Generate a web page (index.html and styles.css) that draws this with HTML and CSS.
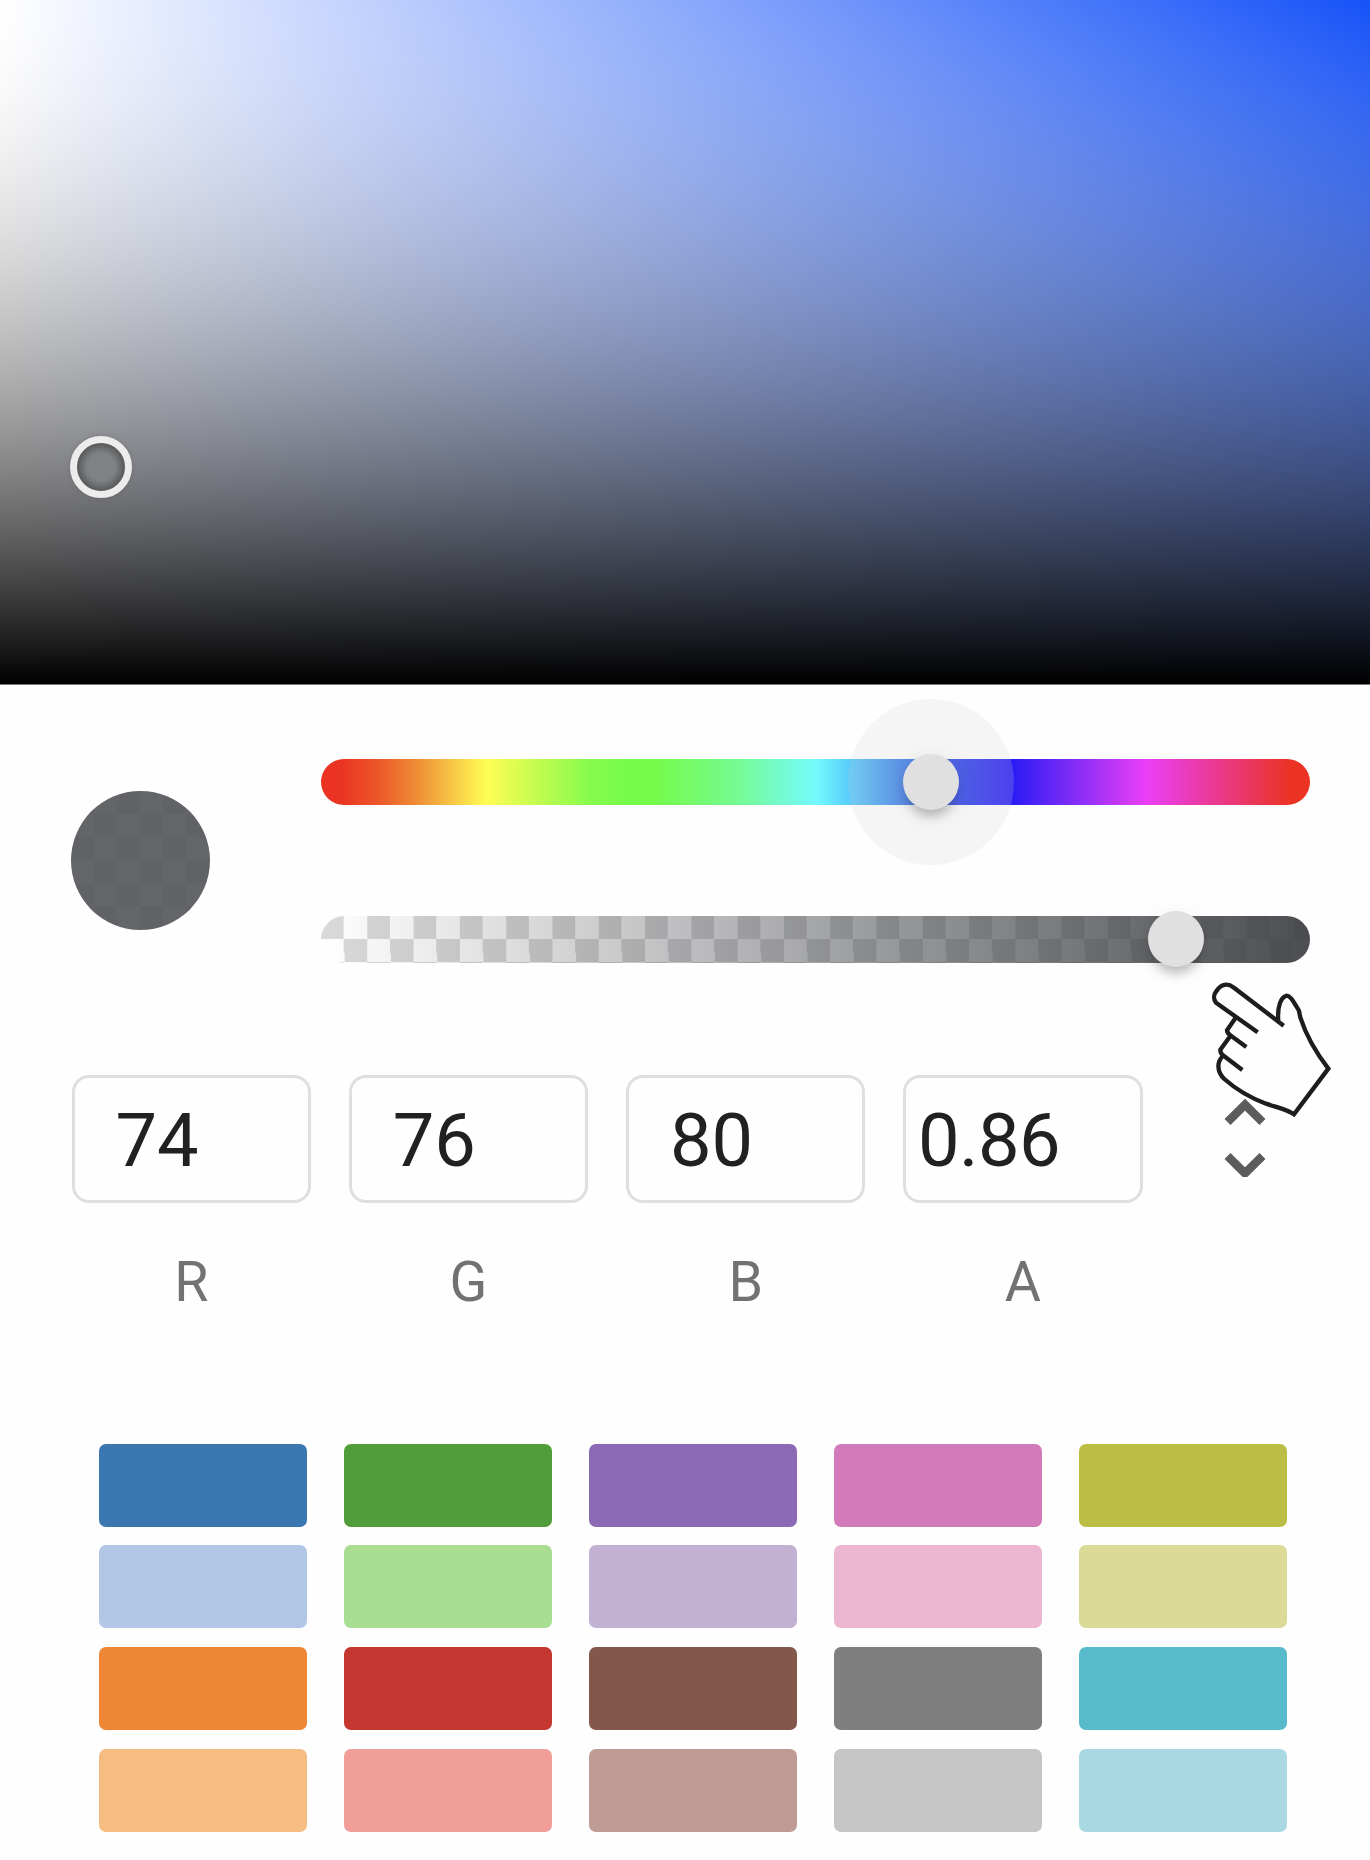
FILE: index.html
```html
<!DOCTYPE html>
<html lang="en">
<head>
<meta charset="utf-8">
<title>Color picker</title>
<link rel="stylesheet" href="styles.css">
</head>
<body>
<main class="picker">
  <section class="canvas">
    <svg class="canvas-fill" viewBox="0 0 1370 684" preserveAspectRatio="none">
      <defs>
        <linearGradient id="saturation" x1="0" y1="0" x2="1" y2="0">
          <stop offset="0" stop-color="#fff"/>
          <stop offset="1" stop-color="#1652f8"/>
        </linearGradient>
        <linearGradient id="value" x1="0" y1="0" x2="0" y2="1">
          <stop offset="0" stop-color="#f4f4f4" stop-opacity="0"/>
          <stop offset="1" stop-color="#000"/>
        </linearGradient>
      </defs>
      <rect width="1370" height="684" fill="url(#saturation)"/>
      <rect width="1370" height="684" fill="url(#value)"/>
    </svg>
    <span class="canvas-dot"></span>
  </section>

  <section class="preview">
    <div class="swatch-dot"></div>
    <div class="sliders">
      <div class="slider hue"><span class="ripple"></span><span class="thumb"></span></div>
      <div class="slider alpha"><span class="thumb"></span></div>
    </div>
  </section>

  <section class="edit">
    <label class="field"><span class="box">74</span><span class="name">R</span></label>
    <label class="field"><span class="box">76</span><span class="name">G</span></label>
    <label class="field"><span class="box">80</span><span class="name">B</span></label>
    <label class="field"><span class="box wide">0.86</span><span class="name">A</span></label>
    <svg class="chevrons" viewBox="0 0 46 80">
      <path d="M5.5 25 23 7.7 40.5 25M5.5 59 23 76.3 40.5 59"/>
    </svg>
  </section>

  <section class="swatches">
    <i class="blue"></i><i class="green"></i><i class="purple"></i><i class="pink"></i><i class="olive"></i>
    <i class="blue-light"></i><i class="green-light"></i><i class="purple-light"></i><i class="pink-light"></i><i class="olive-light"></i>
    <i class="orange"></i><i class="red"></i><i class="brown"></i><i class="gray"></i><i class="cyan"></i>
    <i class="orange-light"></i><i class="red-light"></i><i class="brown-light"></i><i class="gray-light"></i><i class="cyan-light"></i>
  </section>

  <svg class="hand" viewBox="390 300 366 417">
    <path class="palm" d="M592 424C588 378 600 352 617 347C629 347 639 368 650 385C657 393 654 402 659 415C675 465 707 520 742 566L639 703C620 689 590 683 555 671C515 656 465 628 430 597C407 575 407 545 424 526L418 513L448 468L438 453L465 412L405 368C397 358 397 344 407 332C420 313 440 308 457 322Z"/>
    <path class="line" d="M608 437 457 322C440 308 420 313 407 332C397 344 397 358 405 368L530 457M465 412 438 451Q439 460 448 466L496 501M448 468 418 509Q418 520 426 526L484 570M426 528C407 545 407 575 430 597C465 628 515 656 555 671C590 683 620 689 639 703L742 566C707 520 675 465 659 415C654 402 657 393 650 385C639 368 629 347 617 347C600 352 588 378 592 424"/>
  </svg>
</main>
</body>
</html>
```
FILE: styles.css
```css
* { box-sizing: border-box; }

body {
  margin: 0;
  background: #fefefe;
  font-family: Roboto, "Liberation Sans", sans-serif;
}

.picker {
  position: relative;
  width: 1370px;
  height: 1860px;
  overflow: hidden;
}

.canvas {
  position: relative;
  height: 685px;
  border-bottom: 1px solid #777;
}

.canvas-fill { display: block; width: 100%; height: 684px; }

.canvas-dot {
  position: absolute;
  left: 70px;
  top: 436px;
  width: 62px;
  height: 62px;
  border: 7px solid #ececec;
  border-radius: 50%;
  background: radial-gradient(circle, #808183 0 14px, #5b5c5e 23px);
  box-shadow: 0 0 4px rgba(80, 80, 80, .35);
}

.preview {
  display: flex;
  align-items: center;
  justify-content: space-between;
  height: 351px;
  padding: 0 60px 0 71px;
}

.swatch-dot {
  width: 139px;
  height: 139px;
  border-radius: 50%;
  background:
    linear-gradient(rgba(74, 76, 80, .86), rgba(74, 76, 80, .86)),
    repeating-conic-gradient(#fff 0 25%, #e8e8e8 0 50%) 0 0 / 46px 46px;
}

.sliders {
  display: flex;
  flex-direction: column;
  gap: 111px;
  width: 989px;
}

.slider { position: relative; height: 46.5px; border-radius: 24px; }

.hue {
  background: linear-gradient(to right, #ea3323 2%, #ec5a2a 6%, #ee8a35 9.5%, #fffd54 16.67%, #88fb4c 27%, #75fb4c 31%, #75fb4c 34%, #75fb90 42%, #75fbfd 50%, #58cbfb 53.5%, #4184ea 58.5%, #2f48ea 64%, #2b1cf5 70%, #ea3ff7 83.33%, #ea3323 98%);
}

.alpha {
  background:
    linear-gradient(to right, rgba(62, 64, 68, 0), rgba(62, 64, 68, .93)),
    repeating-conic-gradient(#fff 0 25%, #dadada 0 50%) 0 0 / 46.3px 46px;
}

.thumb, .ripple {
  position: absolute;
  top: 50%;
  border-radius: 50%;
  transform: translate(-50%, -50%);
}

.thumb {
  width: 56px;
  height: 56px;
  background: #e0e0e0;
  box-shadow: 0 14px 12px -9px rgba(0, 0, 0, .18), 0 7px 10px rgba(0, 0, 0, .08), 0 5px 23px rgba(0, 0, 0, .08);
}

.ripple {
  width: 166px;
  height: 166px;
  background: rgba(210, 210, 210, .2);
}

.hue .thumb, .hue .ripple { left: 610px; }
.alpha .thumb { left: 855px; }

.edit {
  display: flex;
  gap: 37.6px;
  height: 407px;
  padding: 39px 0 0 71.5px;
}

.field { display: flex; flex-direction: column; width: 239.6px; }

.box {
  height: 128px;
  padding: 0 0 0 41px;
  border: 3px solid #dfdfdf;
  border-radius: 17px;
  color: #212121;
  font-size: 74px;
  line-height: 126px;
}

.wide { padding-left: 12px; letter-spacing: -.6px; }

.name {
  margin-top: 46px;
  color: #727272;
  font-size: 55.5px;
  line-height: 67px;
  text-align: center;
}

.chevrons {
  width: 46px;
  height: 80px;
  margin: 22px 0 0 41.5px;
}

.chevrons path { fill: none; stroke: #5c5c5c; stroke-width: 8.5; }

.swatches {
  display: grid;
  grid-template-columns: repeat(5, 208px);
  grid-auto-rows: 83px;
  gap: 18.8px 37px;
  padding: .6px 0 0 98.6px;
}

.swatches i { border-radius: 7px; }

.blue { background: #3a76af; }
.green { background: #519d3b; }
.purple { background: #8c69b5; }
.pink { background: #d27aba; }
.olive { background: #bcbd45; }
.blue-light { background: #b2c6e5; }
.green-light { background: #a8dd92; }
.purple-light { background: #c2b1d3; }
.pink-light { background: #ecb6d0; }
.olive-light { background: #dbdb97; }
.orange { background: #ef8636; }
.red { background: #c43731; }
.brown { background: #84574b; }
.gray { background: #7f7f7f; }
.cyan { background: #57bbcc; }
.orange-light { background: #f5bd82; }
.red-light { background: #f19e99; }
.brown-light { background: #be9c94; }
.gray-light { background: #c6c6c6; }
.cyan-light { background: #a9d8e3; }

/* pointing hand resting over the alpha slider and the mode arrows */
.hand {
  position: absolute;
  left: 1210.5px;
  top: 980px;
  width: 122px;
  height: 139px;
}

.palm { fill: #fefefe; }
.line { fill: none; stroke: #1d1d1b; stroke-width: 13; }
```
